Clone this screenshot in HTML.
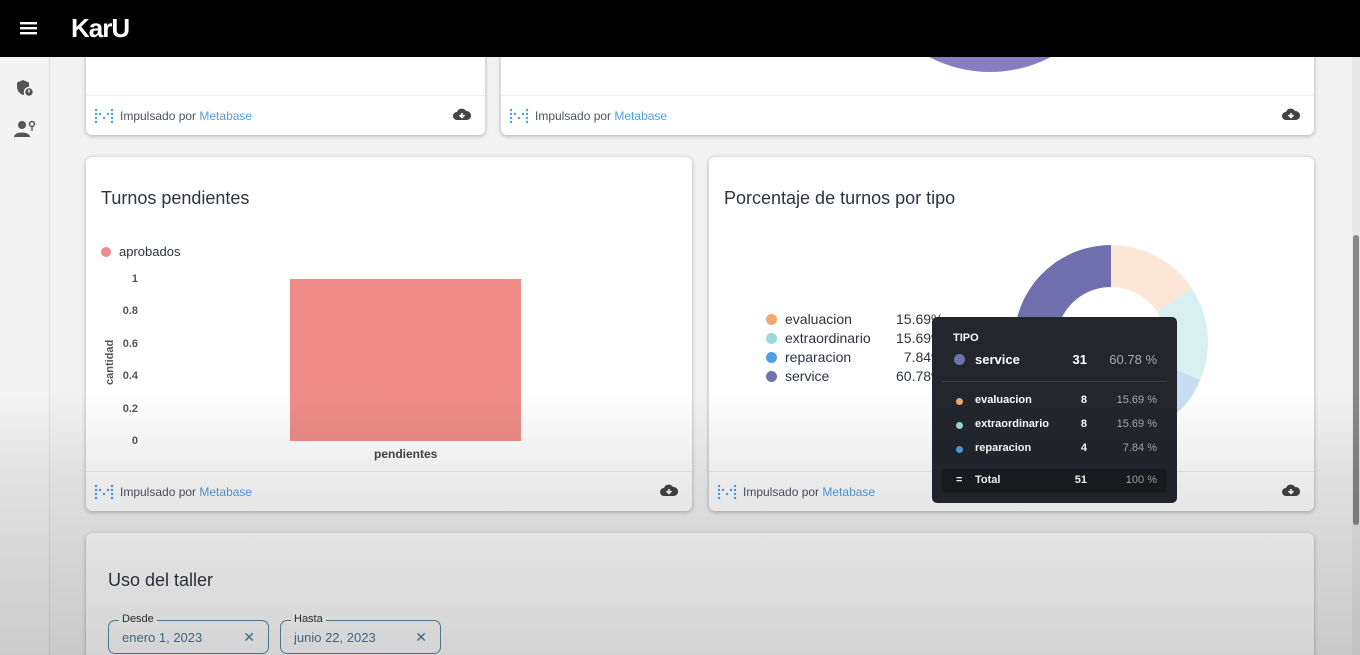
<!DOCTYPE html>
<html><head><meta charset="utf-8"><style>
*{margin:0;padding:0;box-sizing:border-box}
html,body{width:1360px;height:655px;overflow:hidden}
body{background:#f2f2f2;font-family:"Liberation Sans",sans-serif;position:relative;color:#2e3440}
.hdr{position:absolute;left:0;top:0;width:1360px;height:57px;background:#000;z-index:5}
.side{position:absolute;left:0;top:57px;width:50px;height:598px;background:#f4f4f4;border-right:1px solid #ddd}
.card{position:absolute;background:#fff;border-radius:6px;box-shadow:0 1px 4px rgba(0,0,0,.3);overflow:hidden}
.foot{position:absolute;left:0;right:0;bottom:0;height:40px;border-top:1px solid #eee;font-size:12px;color:#4c5260}
.foot .t{position:absolute;left:34px;top:13px}
.foot .t b{font-weight:normal;color:#509ee3}
.mb{position:absolute;left:8px;top:12px}
.dl{position:absolute;right:14px;top:11px}
h2{position:absolute;font-size:18px;font-weight:normal;color:#2e3440}
.lg{position:absolute;font-size:14px;color:#2e3440}
.dot{display:inline-block;width:11px;height:11px;border-radius:50%;vertical-align:-1px;margin-right:8px}
.tt{position:absolute;left:932px;top:317px;width:245px;height:186px;background:#23262d;border-radius:5px;color:#fff;font-size:11px;font-weight:bold;z-index:3}
.tt .r{position:absolute;left:22px;right:20px;height:16px}
.tt .r span{position:absolute}
.ov{position:absolute;left:0;top:0;width:1360px;height:655px;background:linear-gradient(to bottom,rgba(0,0,0,0) 0,rgba(0,0,0,0) 390px,rgba(0,0,0,.08) 480px,rgba(0,0,0,.17) 655px);pointer-events:none;z-index:4}
.fld{position:absolute;top:620px;height:34px;border:1.5px solid #5b8aa0;border-radius:7px;font-size:13px;color:#4b7a95}
.fld .l{position:absolute;top:-8px;left:10px;background:#fff;padding:0 3px;font-size:11px;color:#333}
</style></head><body>
<div class="hdr">
<svg style="position:absolute;left:20px;top:22px" width="17" height="13"><rect y="0" width="17" height="2.4" fill="#fff"/><rect y="5" width="17" height="2.4" fill="#fff"/><rect y="10" width="17" height="2.4" fill="#fff"/></svg>
<div style="position:absolute;left:71px;top:13px;color:#fff;font-size:26px;font-weight:bold;letter-spacing:-1px">KarU</div>
</div>
<div class="side">
<svg style="position:absolute;left:16px;top:22px" width="18" height="18"><path d="M7 1 L13 3.5 V8 C13 12 10 15 7 16 C4 15 1 12 1 8 V3.5Z" fill="#555"/><circle cx="13" cy="13" r="4.5" fill="#555" stroke="#f4f4f4" stroke-width="1.5"/><rect x="12.3" y="10.5" width="1.4" height="3" fill="#fff"/></svg>
<svg style="position:absolute;left:14px;top:63px" width="22" height="18"><circle cx="8" cy="5" r="4" fill="#555"/><path d="M0 17 C0 11 16 11 16 17Z" fill="#555"/><circle cx="18" cy="4" r="2.5" fill="none" stroke="#555" stroke-width="1.5"/><rect x="17.3" y="6" width="1.4" height="5" fill="#555"/></svg>
</div>
<div style="position:absolute;left:1352px;top:57px;width:8px;height:598px;background:#e8e8e8"></div>
<div style="position:absolute;left:1353px;top:235px;width:6px;height:290px;background:#888;border-radius:3px"></div>

<div class="card" style="left:86px;top:40px;width:399px;height:95px">
<div class="foot"><svg class="mb" width="20" height="16"><g fill="#509ee3"><circle cx="2" cy="2" r="1.2"/><circle cx="2" cy="6" r="1.2"/><circle cx="2" cy="10" r="1.2"/><circle cx="2" cy="14" r="1.2"/><circle cx="6" cy="6" r="1.2"/><circle cx="10" cy="10" r="1.2"/><circle cx="14" cy="6" r="1.2"/><circle cx="18" cy="2" r="1.2"/><circle cx="18" cy="6" r="1.2"/><circle cx="18" cy="10" r="1.2"/><circle cx="18" cy="14" r="1.2"/></g></svg><div class="t">Impulsado por <b>Metabase</b></div><svg class="dl" width="18" height="14"><path d="M4 13 A4 4 0 0 1 4 5 A5 5 0 0 1 13 4 A4.5 4.5 0 0 1 14 13Z" fill="#444"/><path d="M9 6 V10 M6.5 8 L9 10.5 L11.5 8" stroke="#fff" stroke-width="1.6" fill="none"/></svg></div>
</div>
<div class="card" style="left:501px;top:40px;width:813px;height:95px">
<svg style="position:absolute;left:0;top:0" width="813" height="60"><circle cx="489" cy="-98" r="130" fill="#8a7cc3"/></svg>
<div class="foot"><svg class="mb" width="20" height="16"><g fill="#509ee3"><circle cx="2" cy="2" r="1.2"/><circle cx="2" cy="6" r="1.2"/><circle cx="2" cy="10" r="1.2"/><circle cx="2" cy="14" r="1.2"/><circle cx="6" cy="6" r="1.2"/><circle cx="10" cy="10" r="1.2"/><circle cx="14" cy="6" r="1.2"/><circle cx="18" cy="2" r="1.2"/><circle cx="18" cy="6" r="1.2"/><circle cx="18" cy="10" r="1.2"/><circle cx="18" cy="14" r="1.2"/></g></svg><div class="t">Impulsado por <b>Metabase</b></div><svg class="dl" width="18" height="14"><path d="M4 13 A4 4 0 0 1 4 5 A5 5 0 0 1 13 4 A4.5 4.5 0 0 1 14 13Z" fill="#444"/><path d="M9 6 V10 M6.5 8 L9 10.5 L11.5 8" stroke="#fff" stroke-width="1.6" fill="none"/></svg></div>
</div>

<div class="card" style="left:86px;top:157px;width:606px;height:354px">
<h2 style="left:15px;top:31px">Turnos pendientes</h2>
<div class="lg" style="left:15px;top:87px;font-size:13px"><span class="dot" style="background:#ef8c8c;width:10px;height:10px"></span>aprobados</div>
<div style="position:absolute;left:28px;top:106px;font-size:11px;font-weight:bold;color:#555;text-align:right;width:24px;line-height:32.4px;white-space:pre">1
0.8
0.6
0.4
0.2
0</div>
<div style="position:absolute;left:18px;top:228px;transform:rotate(-90deg);transform-origin:0 0;font-size:11px;font-weight:bold;color:#555">cantidad</div>
<div style="position:absolute;left:204px;top:122px;width:231px;height:162px;background:#ef8c87"></div>
<div style="position:absolute;left:288px;top:290px;font-size:12px;font-weight:bold;color:#444">pendientes</div>
<div class="foot"><svg class="mb" width="20" height="16"><g fill="#509ee3"><circle cx="2" cy="2" r="1.2"/><circle cx="2" cy="6" r="1.2"/><circle cx="2" cy="10" r="1.2"/><circle cx="2" cy="14" r="1.2"/><circle cx="6" cy="6" r="1.2"/><circle cx="10" cy="10" r="1.2"/><circle cx="14" cy="6" r="1.2"/><circle cx="18" cy="2" r="1.2"/><circle cx="18" cy="6" r="1.2"/><circle cx="18" cy="10" r="1.2"/><circle cx="18" cy="14" r="1.2"/></g></svg><div class="t">Impulsado por <b>Metabase</b></div><svg class="dl" width="18" height="14"><path d="M4 13 A4 4 0 0 1 4 5 A5 5 0 0 1 13 4 A4.5 4.5 0 0 1 14 13Z" fill="#444"/><path d="M9 6 V10 M6.5 8 L9 10.5 L11.5 8" stroke="#fff" stroke-width="1.6" fill="none"/></svg></div>
</div>

<div class="card" style="left:709px;top:157px;width:605px;height:354px">
<h2 style="left:15px;top:31px">Porcentaje de turnos por tipo</h2>
<div class="foot"><svg class="mb" width="20" height="16"><g fill="#509ee3"><circle cx="2" cy="2" r="1.2"/><circle cx="2" cy="6" r="1.2"/><circle cx="2" cy="10" r="1.2"/><circle cx="2" cy="14" r="1.2"/><circle cx="6" cy="6" r="1.2"/><circle cx="10" cy="10" r="1.2"/><circle cx="14" cy="6" r="1.2"/><circle cx="18" cy="2" r="1.2"/><circle cx="18" cy="6" r="1.2"/><circle cx="18" cy="10" r="1.2"/><circle cx="18" cy="14" r="1.2"/></g></svg><div class="t">Impulsado por <b>Metabase</b></div><svg class="dl" width="18" height="14"><path d="M4 13 A4 4 0 0 1 4 5 A5 5 0 0 1 13 4 A4.5 4.5 0 0 1 14 13Z" fill="#444"/><path d="M9 6 V10 M6.5 8 L9 10.5 L11.5 8" stroke="#fff" stroke-width="1.6" fill="none"/></svg></div>
</div>
<svg style="position:absolute;left:0;top:0;z-index:2" width="1360" height="655">
<path d="M1111 245 A97 97 0 0 1 1191.9 288.5 L1156.9 311.6 A55 55 0 0 0 1111 287Z" fill="#fde6d6"/>
<path d="M1191.9 288.5 A97 97 0 0 1 1200.3 379.9 L1161.6 363.5 A55 55 0 0 0 1156.9 311.6Z" fill="#d9f0f0"/>
<path d="M1200.3 379.9 A97 97 0 0 1 1171.8 417.6 L1145.5 384.9 A55 55 0 0 0 1161.6 363.5Z" fill="#c9ddf3"/>
<path d="M1171.8 417.6 A97 97 0 1 1 1111 245 L1111 287 A55 55 0 1 0 1145.5 384.9Z" fill="#6f6fae"/>
</svg>
<div class="lg" style="left:766px;top:310px;line-height:19px;z-index:2">
<div><span class="dot" style="background:#f2a86f"></span>evaluacion</div>
<div><span class="dot" style="background:#98d9d9"></span>extraordinario</div>
<div><span class="dot" style="background:#509ee3"></span>reparacion</div>
<div><span class="dot" style="background:#7172ad"></span>service</div>
</div>
<div class="lg" style="left:896px;top:310px;line-height:19px;z-index:2"><div>15.69%</div><div>15.69%</div><div>&nbsp;&nbsp;7.84%</div><div>60.78%</div></div>

<div class="tt">
<div style="position:absolute;left:21px;top:15px;font-size:11px">TIPO</div>
<div class="r" style="top:35px;font-size:13px"><span style="left:0;top:2px;width:11px;height:11px;border-radius:50%;background:#7172ad"></span><span style="left:21px">service</span><span style="right:70px">31</span><span style="right:0;color:#aaa;font-weight:normal">60.78 %</span></div>
<div style="position:absolute;left:10px;right:10px;top:64px;border-top:1px solid #3a3e46"></div>
<div class="r" style="top:77px"><span style="left:2px;top:4px;width:7px;height:7px;border-radius:50%;background:#f2a86f"></span><span style="left:21px">evaluacion</span><span style="right:70px">8</span><span style="right:0;color:#aaa;font-weight:normal">15.69 %</span></div>
<div class="r" style="top:101px"><span style="left:2px;top:4px;width:7px;height:7px;border-radius:50%;background:#98d9d9"></span><span style="left:21px">extraordinario</span><span style="right:70px">8</span><span style="right:0;color:#aaa;font-weight:normal">15.69 %</span></div>
<div class="r" style="top:125px"><span style="left:2px;top:4px;width:7px;height:7px;border-radius:50%;background:#509ee3"></span><span style="left:21px">reparacion</span><span style="right:70px">4</span><span style="right:0;color:#aaa;font-weight:normal">7.84 %</span></div>
<div style="position:absolute;left:10px;right:10px;top:152px;height:24px;background:#1a1c21;border-radius:3px"></div>
<div class="r" style="top:157px"><span style="left:2px">=</span><span style="left:21px">Total</span><span style="right:70px">51</span><span style="right:0;color:#aaa;font-weight:normal">100 %</span></div>
</div>

<div class="card" style="left:86px;top:533px;width:1228px;height:130px">
<h2 style="left:22px;top:37px">Uso del taller</h2>
</div>
<div class="fld" style="left:108px;width:161px"><span class="l">Desde</span><span style="position:absolute;left:13px;top:9px">enero 1, 2023</span><span style="position:absolute;right:13px;top:8px;font-size:14px">✕</span></div>
<div class="fld" style="left:280px;width:161px"><span class="l">Hasta</span><span style="position:absolute;left:13px;top:9px">junio 22, 2023</span><span style="position:absolute;right:13px;top:8px;font-size:14px">✕</span></div>
<div class="ov"></div>
</body></html>
